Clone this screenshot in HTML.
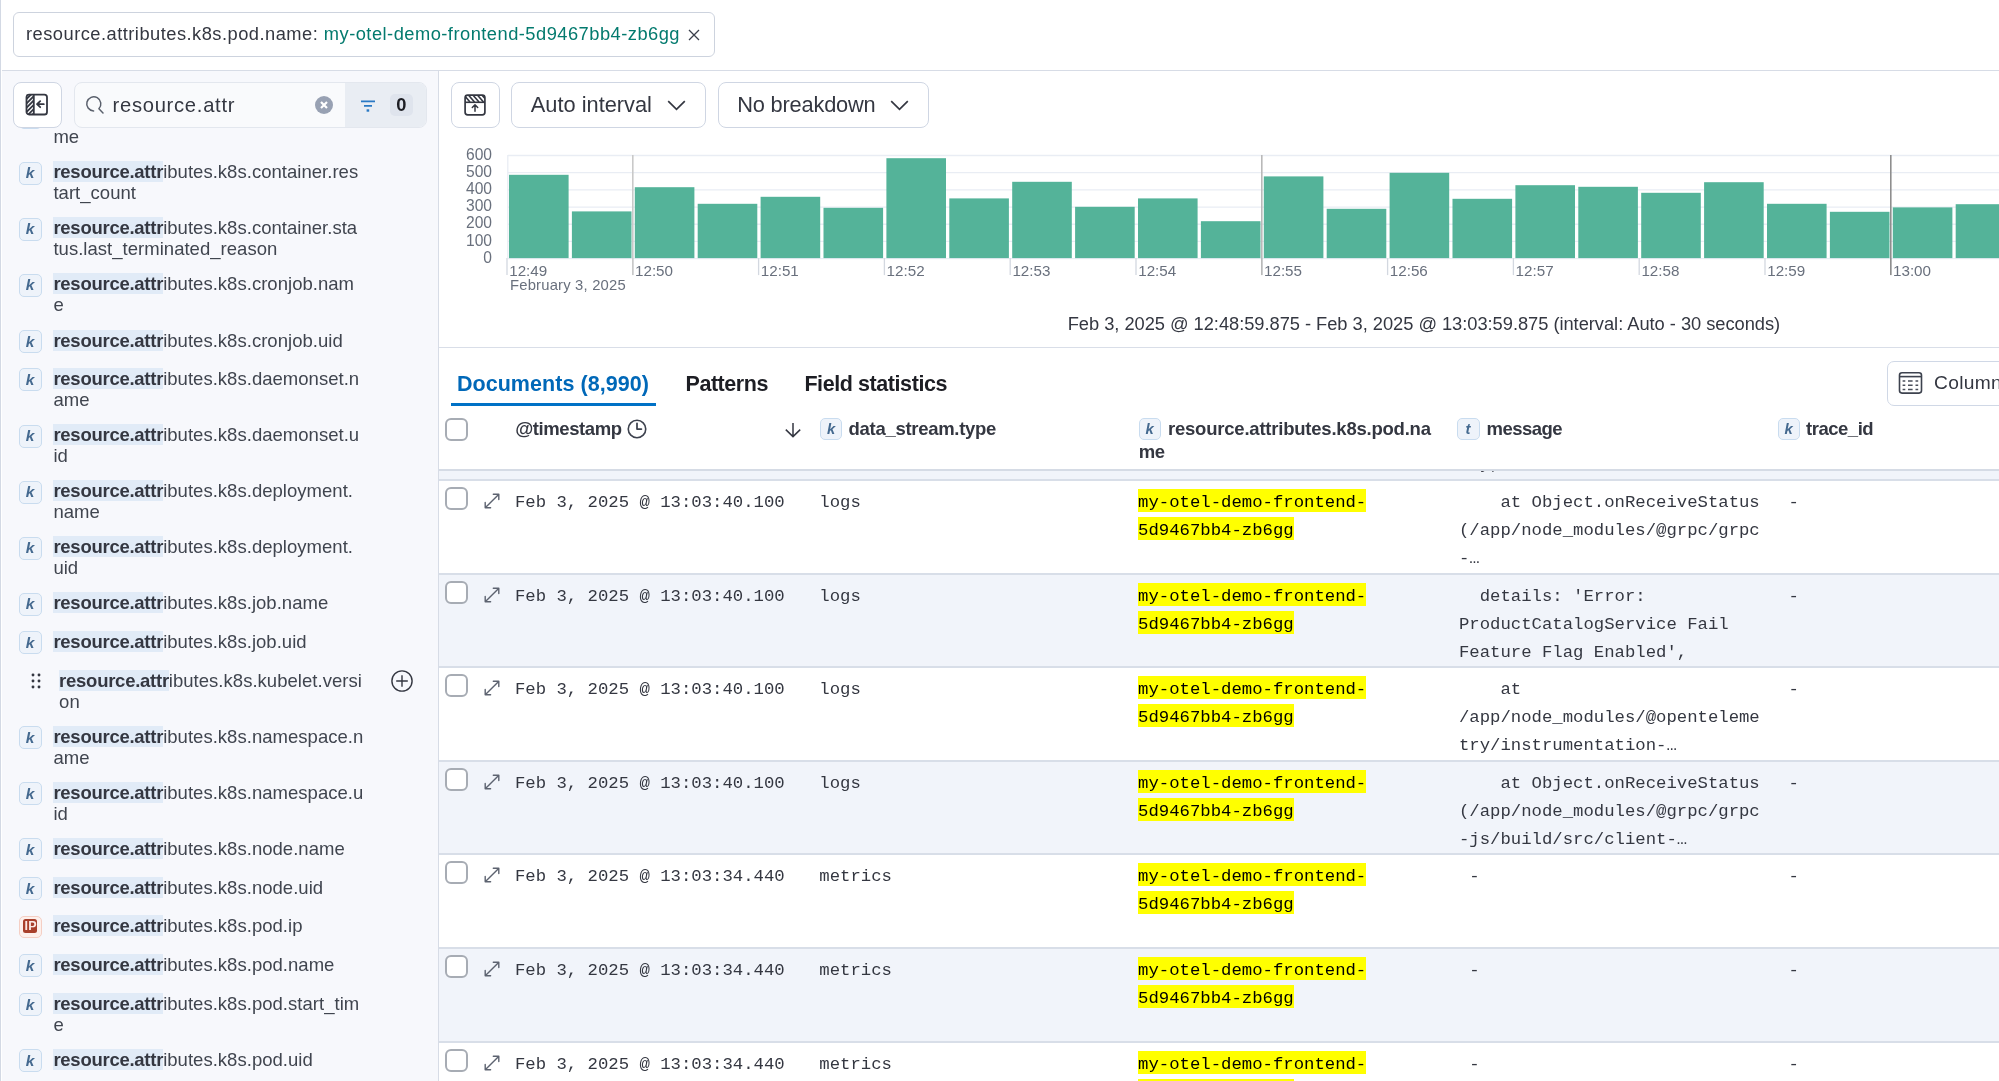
<!DOCTYPE html><html><head><meta charset="utf-8"><style>
*{box-sizing:border-box;margin:0;padding:0}
html,body{width:1999px;height:1081px;overflow:hidden;background:#fff;font-family:'Liberation Sans', sans-serif;color:#343741}
.a{position:absolute}
.t{position:absolute;white-space:pre;line-height:1}
.mono{font-family:'Liberation Mono', monospace}
</style></head><body><div id="root" style="will-change:transform;position:absolute;left:0;top:0;width:1999px;height:1081px;overflow:hidden"><div class="a" style="left:2px;top:69.5px;width:1997px;height:1.2px;background:#d7dce6"></div>
<div class="a" style="left:13px;top:12px;width:702px;height:45px;border:1.3px solid #cdd3de;border-radius:6px;background:#fff"></div>
<div class="t" style="left:26.00px;top:25px;font-size:18.3px;height:18.3px;color:#343741;font-weight:400;letter-spacing:0.48px;font-family:'Liberation Sans', sans-serif;">resource.attributes.k8s.pod.name: <span style="color:#037a6e">my-otel-demo-frontend-5d9467bb4-zb6gg</span></div>
<svg class="a" style="left:687.5px;top:28.5px" width="12" height="12" viewBox="0 0 12 12"><path d="M1 1L11 11M11 1L1 11" stroke="#3a3f4b" stroke-width="1.3" fill="none"/></svg>
<div class="a" style="left:2px;top:70.7px;width:436px;height:1011px;background:#f7f8fc"></div>
<div class="a" style="left:438px;top:70.7px;width:1.2px;height:1011px;background:#d7dce6"></div>
<div class="a" style="left:13px;top:82px;width:48.5px;height:46px;border:1.3px solid #cfd6e3;border-radius:8px;background:#fff"></div>
<svg class="a" style="left:25px;top:93px" width="23" height="23" viewBox="0 0 23 23">
<defs><clipPath id="cp1"><rect x="1.5" y="1.5" width="7.5" height="20"/></clipPath></defs>
<g clip-path="url(#cp1)" stroke="#343741" stroke-width="1.75"><path d="M-6 9.3L9 -5.7M-6 13.6L9 -1.4M-6 17.9L9 2.9M-6 22.2L9 7.2M-6 26.5L9 11.5M-6 30.8L9 15.8M-6 35.1L9 20.1"/></g>
<rect x="1.5" y="1.6" width="20.5" height="19.9" rx="2.6" fill="none" stroke="#343741" stroke-width="1.8"/>
<path d="M8.8 1.6V21.5" stroke="#343741" stroke-width="1.8"/>
<path d="M18.8 11.2H12.2M15.2 8.2L12 11.2L15.2 14.2" stroke="#343741" stroke-width="1.8" fill="none" stroke-linecap="round" stroke-linejoin="round"/>
</svg>
<div class="a" style="left:74px;top:82px;width:352.5px;height:46px;border:1.1px solid #e3e7ee;border-radius:8px;background:#f9fafc;overflow:hidden"><div class="a" style="left:270px;top:0;width:83px;height:46px;background:#e9edf3"></div></div>
<svg class="a" style="left:85px;top:95px" width="20" height="20" viewBox="0 0 20 20"><path d="M8.6 15.9A7.05 7.05 0 1 1 13.9 13.7L18 17.9" fill="none" stroke="#5a606c" stroke-width="1.5" stroke-linecap="round" stroke-linejoin="round"/></svg>
<div class="t" style="left:112.50px;top:95px;font-size:20.2px;height:20.2px;color:#343741;font-weight:400;letter-spacing:0.72px;font-family:'Liberation Sans', sans-serif;">resource.attr</div>
<svg class="a" style="left:315px;top:96px" width="18" height="18" viewBox="0 0 18 18"><circle cx="9" cy="9" r="9" fill="#98a1b3"/><path d="M6 6L12 12M12 6L6 12" stroke="#fff" stroke-width="2.2"/></svg>
<svg class="a" style="left:359.5px;top:100px" width="16" height="12" viewBox="0 0 16 12"><path d="M1 1.3H15M4 5.8H12" stroke="#2a79c4" stroke-width="1.7"/><rect x="6.6" y="9.3" width="2.6" height="2.4" fill="#2a79c4"/></svg>
<div class="a" style="left:390px;top:94px;width:23px;height:22px;border-radius:5px;background:#dfe4ed"></div>
<div class="t" style="left:396.30px;top:96px;font-size:18.3px;height:18.3px;color:#1d1e24;font-weight:700;letter-spacing:0px;font-family:'Liberation Sans', sans-serif;">0</div>
<div class="a" style="left:0px;top:128px;width:438px;height:953px;overflow:hidden"><div class="a" style="left:18.7px;top:-22.47px;width:23.2px;height:23px;border:1.2px solid #c9dcef;border-radius:5px;background:#eef3fa"></div><div class="t" style="left:25.8px;top:-18.77px;font-size:15.5px;font-weight:700;font-style:italic;color:#44698f;height:15.5px">k</div><div class="t" style="left:53.4px;top:-23.00px;font-size:18.5px;line-height:21px;color:#40454f;letter-spacing:0.03px"><span style="background:#e1ebf7;font-weight:700;letter-spacing:-0.26px;color:#343741">resource.attr</span>ibutes.k8s.container.na<br>me</div><div class="a" style="left:18.7px;top:33.60px;width:23.2px;height:23px;border:1.2px solid #c9dcef;border-radius:5px;background:#eef3fa"></div><div class="t" style="left:25.8px;top:37.30px;font-size:15.5px;font-weight:700;font-style:italic;color:#44698f;height:15.5px">k</div><div class="t" style="left:53.4px;top:33.00px;font-size:18.5px;line-height:21px;color:#40454f;letter-spacing:0.03px"><span style="background:#e1ebf7;font-weight:700;letter-spacing:-0.26px;color:#343741">resource.attr</span>ibutes.k8s.container.res<br>tart_count</div><div class="a" style="left:18.7px;top:89.67px;width:23.2px;height:23px;border:1.2px solid #c9dcef;border-radius:5px;background:#eef3fa"></div><div class="t" style="left:25.8px;top:93.37px;font-size:15.5px;font-weight:700;font-style:italic;color:#44698f;height:15.5px">k</div><div class="t" style="left:53.4px;top:89.00px;font-size:18.5px;line-height:21px;color:#40454f;letter-spacing:0.03px"><span style="background:#e1ebf7;font-weight:700;letter-spacing:-0.26px;color:#343741">resource.attr</span>ibutes.k8s.container.sta<br>tus.last_terminated_reason</div><div class="a" style="left:18.7px;top:145.74px;width:23.2px;height:23px;border:1.2px solid #c9dcef;border-radius:5px;background:#eef3fa"></div><div class="t" style="left:25.8px;top:149.44px;font-size:15.5px;font-weight:700;font-style:italic;color:#44698f;height:15.5px">k</div><div class="t" style="left:53.4px;top:145.00px;font-size:18.5px;line-height:21px;color:#40454f;letter-spacing:0.03px"><span style="background:#e1ebf7;font-weight:700;letter-spacing:-0.26px;color:#343741">resource.attr</span>ibutes.k8s.cronjob.nam<br>e</div><div class="a" style="left:18.7px;top:201.81px;width:23.2px;height:23px;border:1.2px solid #c9dcef;border-radius:5px;background:#eef3fa"></div><div class="t" style="left:25.8px;top:205.51px;font-size:15.5px;font-weight:700;font-style:italic;color:#44698f;height:15.5px">k</div><div class="t" style="left:53.4px;top:202.00px;font-size:18.5px;line-height:21px;color:#40454f;letter-spacing:0.03px"><span style="background:#e1ebf7;font-weight:700;letter-spacing:-0.26px;color:#343741">resource.attr</span>ibutes.k8s.cronjob.uid</div><div class="a" style="left:18.7px;top:240.46px;width:23.2px;height:23px;border:1.2px solid #c9dcef;border-radius:5px;background:#eef3fa"></div><div class="t" style="left:25.8px;top:244.16px;font-size:15.5px;font-weight:700;font-style:italic;color:#44698f;height:15.5px">k</div><div class="t" style="left:53.4px;top:240.00px;font-size:18.5px;line-height:21px;color:#40454f;letter-spacing:0.03px"><span style="background:#e1ebf7;font-weight:700;letter-spacing:-0.26px;color:#343741">resource.attr</span>ibutes.k8s.daemonset.n<br>ame</div><div class="a" style="left:18.7px;top:296.53px;width:23.2px;height:23px;border:1.2px solid #c9dcef;border-radius:5px;background:#eef3fa"></div><div class="t" style="left:25.8px;top:300.23px;font-size:15.5px;font-weight:700;font-style:italic;color:#44698f;height:15.5px">k</div><div class="t" style="left:53.4px;top:296.00px;font-size:18.5px;line-height:21px;color:#40454f;letter-spacing:0.03px"><span style="background:#e1ebf7;font-weight:700;letter-spacing:-0.26px;color:#343741">resource.attr</span>ibutes.k8s.daemonset.u<br>id</div><div class="a" style="left:18.7px;top:352.60px;width:23.2px;height:23px;border:1.2px solid #c9dcef;border-radius:5px;background:#eef3fa"></div><div class="t" style="left:25.8px;top:356.30px;font-size:15.5px;font-weight:700;font-style:italic;color:#44698f;height:15.5px">k</div><div class="t" style="left:53.4px;top:352.00px;font-size:18.5px;line-height:21px;color:#40454f;letter-spacing:0.03px"><span style="background:#e1ebf7;font-weight:700;letter-spacing:-0.26px;color:#343741">resource.attr</span>ibutes.k8s.deployment.<br>name</div><div class="a" style="left:18.7px;top:408.67px;width:23.2px;height:23px;border:1.2px solid #c9dcef;border-radius:5px;background:#eef3fa"></div><div class="t" style="left:25.8px;top:412.37px;font-size:15.5px;font-weight:700;font-style:italic;color:#44698f;height:15.5px">k</div><div class="t" style="left:53.4px;top:408.00px;font-size:18.5px;line-height:21px;color:#40454f;letter-spacing:0.03px"><span style="background:#e1ebf7;font-weight:700;letter-spacing:-0.26px;color:#343741">resource.attr</span>ibutes.k8s.deployment.<br>uid</div><div class="a" style="left:18.7px;top:464.74px;width:23.2px;height:23px;border:1.2px solid #c9dcef;border-radius:5px;background:#eef3fa"></div><div class="t" style="left:25.8px;top:468.44px;font-size:15.5px;font-weight:700;font-style:italic;color:#44698f;height:15.5px">k</div><div class="t" style="left:53.4px;top:464.00px;font-size:18.5px;line-height:21px;color:#40454f;letter-spacing:0.03px"><span style="background:#e1ebf7;font-weight:700;letter-spacing:-0.26px;color:#343741">resource.attr</span>ibutes.k8s.job.name</div><div class="a" style="left:18.7px;top:503.39px;width:23.2px;height:23px;border:1.2px solid #c9dcef;border-radius:5px;background:#eef3fa"></div><div class="t" style="left:25.8px;top:507.09px;font-size:15.5px;font-weight:700;font-style:italic;color:#44698f;height:15.5px">k</div><div class="t" style="left:53.4px;top:503.00px;font-size:18.5px;line-height:21px;color:#40454f;letter-spacing:0.03px"><span style="background:#e1ebf7;font-weight:700;letter-spacing:-0.26px;color:#343741">resource.attr</span>ibutes.k8s.job.uid</div><svg class="a" style="left:31.00px;top:545.40px" width="4" height="4"><circle cx="2" cy="2" r="1.45" fill="#343741"/></svg><svg class="a" style="left:31.00px;top:551.20px" width="4" height="4"><circle cx="2" cy="2" r="1.45" fill="#343741"/></svg><svg class="a" style="left:31.00px;top:556.90px" width="4" height="4"><circle cx="2" cy="2" r="1.45" fill="#343741"/></svg><svg class="a" style="left:36.80px;top:545.40px" width="4" height="4"><circle cx="2" cy="2" r="1.45" fill="#343741"/></svg><svg class="a" style="left:36.80px;top:551.20px" width="4" height="4"><circle cx="2" cy="2" r="1.45" fill="#343741"/></svg><svg class="a" style="left:36.80px;top:556.90px" width="4" height="4"><circle cx="2" cy="2" r="1.45" fill="#343741"/></svg><svg class="a" style="left:391px;top:541.90px" width="22" height="22" viewBox="0 0 22 22"><circle cx="11" cy="11" r="10.1" fill="none" stroke="#343741" stroke-width="1.4"/><path d="M11 5.2V16.8M5.2 11H16.8" stroke="#343741" stroke-width="1.4"/></svg><div class="t" style="left:59.1px;top:542.00px;font-size:18.5px;line-height:21px;color:#40454f;letter-spacing:0.03px"><span style="background:#e1ebf7;font-weight:700;letter-spacing:-0.26px;color:#343741">resource.attr</span>ibutes.k8s.kubelet.versi<br>on</div><div class="a" style="left:18.7px;top:598.11px;width:23.2px;height:23px;border:1.2px solid #c9dcef;border-radius:5px;background:#eef3fa"></div><div class="t" style="left:25.8px;top:601.81px;font-size:15.5px;font-weight:700;font-style:italic;color:#44698f;height:15.5px">k</div><div class="t" style="left:53.4px;top:598.00px;font-size:18.5px;line-height:21px;color:#40454f;letter-spacing:0.03px"><span style="background:#e1ebf7;font-weight:700;letter-spacing:-0.26px;color:#343741">resource.attr</span>ibutes.k8s.namespace.n<br>ame</div><div class="a" style="left:18.7px;top:654.18px;width:23.2px;height:23px;border:1.2px solid #c9dcef;border-radius:5px;background:#eef3fa"></div><div class="t" style="left:25.8px;top:657.88px;font-size:15.5px;font-weight:700;font-style:italic;color:#44698f;height:15.5px">k</div><div class="t" style="left:53.4px;top:654.00px;font-size:18.5px;line-height:21px;color:#40454f;letter-spacing:0.03px"><span style="background:#e1ebf7;font-weight:700;letter-spacing:-0.26px;color:#343741">resource.attr</span>ibutes.k8s.namespace.u<br>id</div><div class="a" style="left:18.7px;top:710.25px;width:23.2px;height:23px;border:1.2px solid #c9dcef;border-radius:5px;background:#eef3fa"></div><div class="t" style="left:25.8px;top:713.95px;font-size:15.5px;font-weight:700;font-style:italic;color:#44698f;height:15.5px">k</div><div class="t" style="left:53.4px;top:710.00px;font-size:18.5px;line-height:21px;color:#40454f;letter-spacing:0.03px"><span style="background:#e1ebf7;font-weight:700;letter-spacing:-0.26px;color:#343741">resource.attr</span>ibutes.k8s.node.name</div><div class="a" style="left:18.7px;top:748.90px;width:23.2px;height:23px;border:1.2px solid #c9dcef;border-radius:5px;background:#eef3fa"></div><div class="t" style="left:25.8px;top:752.60px;font-size:15.5px;font-weight:700;font-style:italic;color:#44698f;height:15.5px">k</div><div class="t" style="left:53.4px;top:749.00px;font-size:18.5px;line-height:21px;color:#40454f;letter-spacing:0.03px"><span style="background:#e1ebf7;font-weight:700;letter-spacing:-0.26px;color:#343741">resource.attr</span>ibutes.k8s.node.uid</div><div class="a" style="left:19px;top:787.55px;width:22.8px;height:22.5px;border:1.2px solid #f5cfc4;border-radius:5px;background:#fdf0ec"></div><div class="a" style="left:23.2px;top:790.65px;width:13.8px;height:14.7px;border-radius:2.5px;background:#a83f2b"></div><div class="t" style="left:24.6px;top:791.65px;font-size:12.5px;font-weight:700;color:#fbe9e4;height:12.5px;letter-spacing:0.2px">IP</div><div class="t" style="left:53.4px;top:787.00px;font-size:18.5px;line-height:21px;color:#40454f;letter-spacing:0.03px"><span style="background:#e1ebf7;font-weight:700;letter-spacing:-0.26px;color:#343741">resource.attr</span>ibutes.k8s.pod.ip</div><div class="a" style="left:18.7px;top:826.20px;width:23.2px;height:23px;border:1.2px solid #c9dcef;border-radius:5px;background:#eef3fa"></div><div class="t" style="left:25.8px;top:829.90px;font-size:15.5px;font-weight:700;font-style:italic;color:#44698f;height:15.5px">k</div><div class="t" style="left:53.4px;top:826.00px;font-size:18.5px;line-height:21px;color:#40454f;letter-spacing:0.03px"><span style="background:#e1ebf7;font-weight:700;letter-spacing:-0.26px;color:#343741">resource.attr</span>ibutes.k8s.pod.name</div><div class="a" style="left:18.7px;top:864.85px;width:23.2px;height:23px;border:1.2px solid #c9dcef;border-radius:5px;background:#eef3fa"></div><div class="t" style="left:25.8px;top:868.55px;font-size:15.5px;font-weight:700;font-style:italic;color:#44698f;height:15.5px">k</div><div class="t" style="left:53.4px;top:865.00px;font-size:18.5px;line-height:21px;color:#40454f;letter-spacing:0.03px"><span style="background:#e1ebf7;font-weight:700;letter-spacing:-0.26px;color:#343741">resource.attr</span>ibutes.k8s.pod.start_tim<br>e</div><div class="a" style="left:18.7px;top:920.92px;width:23.2px;height:23px;border:1.2px solid #c9dcef;border-radius:5px;background:#eef3fa"></div><div class="t" style="left:25.8px;top:924.62px;font-size:15.5px;font-weight:700;font-style:italic;color:#44698f;height:15.5px">k</div><div class="t" style="left:53.4px;top:921.00px;font-size:18.5px;line-height:21px;color:#40454f;letter-spacing:0.03px"><span style="background:#e1ebf7;font-weight:700;letter-spacing:-0.26px;color:#343741">resource.attr</span>ibutes.k8s.pod.uid</div></div>
<div class="a" style="left:0;top:0;width:1.4px;height:1081px;background:#d3d9e4"></div>
<div class="a" style="left:451px;top:82px;width:48.5px;height:46px;border:1.3px solid #cfd6e3;border-radius:8px;background:#fff"></div>
<svg class="a" style="left:463.5px;top:93.5px" width="22" height="22" viewBox="0 0 22 22">
<defs><clipPath id="cp2"><rect x="1" y="1" width="20" height="7"/></clipPath></defs>
<g clip-path="url(#cp2)" stroke="#343741" stroke-width="1.6"><path d="M-1 0L6 8M3.5 0L10.5 8M8 0L15 8M12.5 0L19.5 8M17 0L24 8"/></g>
<rect x="1.1" y="1.1" width="19.8" height="19.8" rx="2.6" fill="none" stroke="#343741" stroke-width="1.7"/>
<path d="M1.1 8.3H20.9" stroke="#343741" stroke-width="1.6"/>
<path d="M11 17.2V11M8.3 13.5L11 10.8L13.7 13.5" stroke="#343741" stroke-width="1.5" fill="none" stroke-linecap="round" stroke-linejoin="round"/>
</svg>
<div class="a" style="left:511.4px;top:82px;width:194.4px;height:46px;border:1.3px solid #cfd6e3;border-radius:8px;background:#fff"></div>
<div class="t" style="left:530.80px;top:94px;font-size:21.8px;height:21.8px;color:#343741;font-weight:400;letter-spacing:0.0px;font-family:'Liberation Sans', sans-serif;">Auto interval</div>
<svg class="a" style="left:667.2px;top:99.5px" width="19" height="11" viewBox="0 0 19 11"><path d="M1.2 1.2L9.5 9.3L17.8 1.2" fill="none" stroke="#343741" stroke-width="1.7"/></svg>
<div class="a" style="left:718.4px;top:82px;width:210.4px;height:46px;border:1.3px solid #cfd6e3;border-radius:8px;background:#fff"></div>
<div class="t" style="left:737.30px;top:94px;font-size:21.8px;height:21.8px;color:#343741;font-weight:400;letter-spacing:-0.2px;font-family:'Liberation Sans', sans-serif;">No breakdown</div>
<svg class="a" style="left:890.2px;top:99.5px" width="19" height="11" viewBox="0 0 19 11"><path d="M1.2 1.2L9.5 9.3L17.8 1.2" fill="none" stroke="#343741" stroke-width="1.7"/></svg>
<svg class="a" style="left:507.6px;top:155.2px;overflow:visible" width="1491.4" height="125" viewBox="0 0 1491.4 125"><line x1="0" x2="1491.4" y1="0.50" y2="0.50" stroke="#e9edf4" stroke-width="1.3"/><line x1="0" x2="1491.4" y1="17.68" y2="17.68" stroke="#e9edf4" stroke-width="1.3"/><line x1="0" x2="1491.4" y1="34.87" y2="34.87" stroke="#e9edf4" stroke-width="1.3"/><line x1="0" x2="1491.4" y1="52.05" y2="52.05" stroke="#e9edf4" stroke-width="1.3"/><line x1="0" x2="1491.4" y1="69.23" y2="69.23" stroke="#e9edf4" stroke-width="1.3"/><line x1="0" x2="1491.4" y1="86.42" y2="86.42" stroke="#e9edf4" stroke-width="1.3"/><line x1="0" x2="1491.4" y1="103.60" y2="103.60" stroke="#e9edf4" stroke-width="1.3"/><line x1="-0.2" x2="-0.2" y1="0" y2="103.10" stroke="#e9edf4" stroke-width="1.3"/><rect x="1.00" y="19.80" width="59.6" height="83.30" fill="#54b399"/><rect x="63.90" y="56.40" width="59.6" height="46.70" fill="#54b399"/><rect x="126.80" y="32.20" width="59.6" height="70.90" fill="#54b399"/><rect x="189.70" y="48.80" width="59.6" height="54.30" fill="#54b399"/><rect x="252.60" y="41.80" width="59.6" height="61.30" fill="#54b399"/><rect x="315.50" y="52.80" width="59.6" height="50.30" fill="#54b399"/><rect x="378.40" y="3.20" width="59.6" height="99.90" fill="#54b399"/><rect x="441.30" y="43.40" width="59.6" height="59.70" fill="#54b399"/><rect x="504.20" y="26.80" width="59.6" height="76.30" fill="#54b399"/><rect x="567.10" y="51.80" width="59.6" height="51.30" fill="#54b399"/><rect x="630.00" y="43.40" width="59.6" height="59.70" fill="#54b399"/><rect x="692.90" y="66.20" width="59.6" height="36.90" fill="#54b399"/><rect x="755.80" y="21.40" width="59.6" height="81.70" fill="#54b399"/><rect x="818.70" y="53.80" width="59.6" height="49.30" fill="#54b399"/><rect x="881.60" y="17.80" width="59.6" height="85.30" fill="#54b399"/><rect x="944.50" y="43.80" width="59.6" height="59.30" fill="#54b399"/><rect x="1007.40" y="30.20" width="59.6" height="72.90" fill="#54b399"/><rect x="1070.30" y="31.80" width="59.6" height="71.30" fill="#54b399"/><rect x="1133.20" y="37.80" width="59.6" height="65.30" fill="#54b399"/><rect x="1196.10" y="27.20" width="59.6" height="75.90" fill="#54b399"/><rect x="1259.00" y="48.80" width="59.6" height="54.30" fill="#54b399"/><rect x="1321.90" y="56.80" width="59.6" height="46.30" fill="#54b399"/><rect x="1384.80" y="52.40" width="59.6" height="50.70" fill="#54b399"/><rect x="1447.70" y="49.20" width="59.6" height="53.90" fill="#54b399"/><line x1="-1.00" x2="-1.00" y1="103.10" y2="120.10" stroke="#d3d8e0" stroke-width="1.3"/><line x1="124.80" x2="124.80" y1="103.10" y2="120.10" stroke="#d3d8e0" stroke-width="1.3"/><line x1="250.60" x2="250.60" y1="103.10" y2="120.10" stroke="#d3d8e0" stroke-width="1.3"/><line x1="376.40" x2="376.40" y1="103.10" y2="120.10" stroke="#d3d8e0" stroke-width="1.3"/><line x1="502.20" x2="502.20" y1="103.10" y2="120.10" stroke="#d3d8e0" stroke-width="1.3"/><line x1="628.00" x2="628.00" y1="103.10" y2="120.10" stroke="#d3d8e0" stroke-width="1.3"/><line x1="753.80" x2="753.80" y1="103.10" y2="120.10" stroke="#d3d8e0" stroke-width="1.3"/><line x1="879.60" x2="879.60" y1="103.10" y2="120.10" stroke="#d3d8e0" stroke-width="1.3"/><line x1="1005.40" x2="1005.40" y1="103.10" y2="120.10" stroke="#d3d8e0" stroke-width="1.3"/><line x1="1131.20" x2="1131.20" y1="103.10" y2="120.10" stroke="#d3d8e0" stroke-width="1.3"/><line x1="1257.00" x2="1257.00" y1="103.10" y2="120.10" stroke="#d3d8e0" stroke-width="1.3"/><line x1="1382.80" x2="1382.80" y1="103.10" y2="120.10" stroke="#d3d8e0" stroke-width="1.3"/><line x1="124.80" x2="124.80" y1="0" y2="120.10" stroke="#c9c9c9" stroke-width="1.6"/><line x1="753.80" x2="753.80" y1="0" y2="120.10" stroke="#b9b9b9" stroke-width="1.6"/><line x1="1382.80" x2="1382.80" y1="0" y2="120.10" stroke="#8e8e8e" stroke-width="1.6"/></svg>
<div class="t" style="left:420px;width:72px;text-align:right;top:147px;font-size:15.6px;height:15.6px;color:#69707d">600</div>
<div class="t" style="left:420px;width:72px;text-align:right;top:164px;font-size:15.6px;height:15.6px;color:#69707d">500</div>
<div class="t" style="left:420px;width:72px;text-align:right;top:181px;font-size:15.6px;height:15.6px;color:#69707d">400</div>
<div class="t" style="left:420px;width:72px;text-align:right;top:198px;font-size:15.6px;height:15.6px;color:#69707d">300</div>
<div class="t" style="left:420px;width:72px;text-align:right;top:215px;font-size:15.6px;height:15.6px;color:#69707d">200</div>
<div class="t" style="left:420px;width:72px;text-align:right;top:233px;font-size:15.6px;height:15.6px;color:#69707d">100</div>
<div class="t" style="left:420px;width:72px;text-align:right;top:250px;font-size:15.6px;height:15.6px;color:#69707d">0</div>
<div class="t" style="left:509.20px;top:263px;font-size:15.2px;height:15.2px;color:#69707d;font-weight:400;letter-spacing:0px;font-family:'Liberation Sans', sans-serif;">12:49</div>
<div class="t" style="left:635.00px;top:263px;font-size:15.2px;height:15.2px;color:#69707d;font-weight:400;letter-spacing:0px;font-family:'Liberation Sans', sans-serif;">12:50</div>
<div class="t" style="left:760.80px;top:263px;font-size:15.2px;height:15.2px;color:#69707d;font-weight:400;letter-spacing:0px;font-family:'Liberation Sans', sans-serif;">12:51</div>
<div class="t" style="left:886.60px;top:263px;font-size:15.2px;height:15.2px;color:#69707d;font-weight:400;letter-spacing:0px;font-family:'Liberation Sans', sans-serif;">12:52</div>
<div class="t" style="left:1012.40px;top:263px;font-size:15.2px;height:15.2px;color:#69707d;font-weight:400;letter-spacing:0px;font-family:'Liberation Sans', sans-serif;">12:53</div>
<div class="t" style="left:1138.20px;top:263px;font-size:15.2px;height:15.2px;color:#69707d;font-weight:400;letter-spacing:0px;font-family:'Liberation Sans', sans-serif;">12:54</div>
<div class="t" style="left:1264.00px;top:263px;font-size:15.2px;height:15.2px;color:#69707d;font-weight:400;letter-spacing:0px;font-family:'Liberation Sans', sans-serif;">12:55</div>
<div class="t" style="left:1389.80px;top:263px;font-size:15.2px;height:15.2px;color:#69707d;font-weight:400;letter-spacing:0px;font-family:'Liberation Sans', sans-serif;">12:56</div>
<div class="t" style="left:1515.60px;top:263px;font-size:15.2px;height:15.2px;color:#69707d;font-weight:400;letter-spacing:0px;font-family:'Liberation Sans', sans-serif;">12:57</div>
<div class="t" style="left:1641.40px;top:263px;font-size:15.2px;height:15.2px;color:#69707d;font-weight:400;letter-spacing:0px;font-family:'Liberation Sans', sans-serif;">12:58</div>
<div class="t" style="left:1767.20px;top:263px;font-size:15.2px;height:15.2px;color:#69707d;font-weight:400;letter-spacing:0px;font-family:'Liberation Sans', sans-serif;">12:59</div>
<div class="t" style="left:1893.00px;top:263px;font-size:15.2px;height:15.2px;color:#69707d;font-weight:400;letter-spacing:0px;font-family:'Liberation Sans', sans-serif;">13:00</div>
<div class="t" style="left:510.00px;top:278px;font-size:14.8px;height:14.8px;color:#69707d;font-weight:400;letter-spacing:0.2px;font-family:'Liberation Sans', sans-serif;">February 3, 2025</div>
<div class="t" style="left:1067.70px;top:315px;font-size:18.3px;height:18.3px;color:#343741;font-weight:400;letter-spacing:-0.03px;font-family:'Liberation Sans', sans-serif;">Feb 3, 2025 @ 12:48:59.875 - Feb 3, 2025 @ 13:03:59.875 (interval: Auto - 30 seconds)</div>
<div class="a" style="left:439px;top:347.2px;width:1560px;height:1.3px;background:#d9dee8"></div>
<div class="t" style="left:456.90px;top:374px;font-size:21.5px;height:21.5px;color:#0068b8;font-weight:700;letter-spacing:0.05px;font-family:'Liberation Sans', sans-serif;">Documents (8,990)</div>
<div class="a" style="left:451px;top:402.7px;width:205px;height:3.5px;background:#0071c6"></div>
<div class="t" style="left:685.50px;top:374px;font-size:21.5px;height:21.5px;color:#1d1e24;font-weight:700;letter-spacing:-0.45px;font-family:'Liberation Sans', sans-serif;">Patterns</div>
<div class="t" style="left:804.40px;top:374px;font-size:21.5px;height:21.5px;color:#1d1e24;font-weight:700;letter-spacing:-0.42px;font-family:'Liberation Sans', sans-serif;">Field statistics</div>
<div class="a" style="left:1886.5px;top:360.5px;width:200px;height:45px;border:1.3px solid #d0d8e6;border-radius:7px;background:#fff"></div>
<svg class="a" style="left:1898px;top:371px" width="25" height="25" viewBox="0 0 25 25">
<rect x="1.5" y="1.7" width="22" height="20.4" rx="2.5" fill="none" stroke="#3d424e" stroke-width="1.6"/>
<path d="M1.5 5.6H23.5" stroke="#3d424e" stroke-width="1.6"/>
<path d="M4.6 9.9H7.3M10 9.9H14.6M17.5 9.9H20.2M4.6 14.2H7.3M10 14.2H14.6M17.5 14.2H20.2M4.6 18.5H7.3M10 18.5H14.6M17.5 18.5H20.2" stroke="#4a4f5b" stroke-width="1.5"/>
</svg>
<div class="t" style="left:1934.00px;top:373px;font-size:19.2px;height:19.2px;color:#343741;font-weight:400;letter-spacing:0.3px;font-family:'Liberation Sans', sans-serif;">Columns</div>
<div class="a" style="left:445.4px;top:418.2px;width:22.8px;height:22.8px;border:2px solid #a7acb4;border-radius:6px;background:#fff"></div>
<div class="t" style="left:515.20px;top:420px;font-size:18.5px;height:18.5px;color:#343741;font-weight:700;letter-spacing:-0.42px;font-family:'Liberation Sans', sans-serif;">@timestamp</div>
<svg class="a" style="left:627.2px;top:419.2px" width="20" height="20" viewBox="0 0 20 20"><circle cx="10" cy="10" r="8.75" fill="none" stroke="#3d424e" stroke-width="1.6"/><path d="M10 4.3V10H14.4" fill="none" stroke="#3d424e" stroke-width="1.75" stroke-linecap="round" stroke-linejoin="round"/></svg>
<svg class="a" style="left:784px;top:422px" width="18" height="16" viewBox="0 0 18 16"><path d="M9 1V14.5M1.8 7.6L9 14.6L16.2 7.6" fill="none" stroke="#343741" stroke-width="1.5"/></svg>
<div class="a" style="left:820.2px;top:418.2px;width:22.2px;height:22px;border:1.2px solid #c9dcef;border-radius:5px;background:#eef3fa"></div>
<div class="t" style="left:827.0px;top:422.4px;font-size:14.8px;height:14.8px;font-weight:700;font-style:italic;color:#44698f">k</div>
<div class="t" style="left:848.60px;top:420px;font-size:18.5px;height:18.5px;color:#343741;font-weight:700;letter-spacing:-0.3px;font-family:'Liberation Sans', sans-serif;">data_stream.type</div>
<div class="a" style="left:1138.7px;top:418.1px;width:22.2px;height:22px;border:1.2px solid #c9dcef;border-radius:5px;background:#eef3fa"></div>
<div class="t" style="left:1145.5px;top:422.3px;font-size:14.8px;height:14.8px;font-weight:700;font-style:italic;color:#44698f">k</div>
<div class="t" style="left:1168.00px;top:420px;font-size:18.5px;height:18.5px;color:#343741;font-weight:700;letter-spacing:-0.22px;font-family:'Liberation Sans', sans-serif;">resource.attributes.k8s.pod.na</div>
<div class="t" style="left:1138.70px;top:443px;font-size:18.5px;height:18.5px;color:#343741;font-weight:700;letter-spacing:-0.3px;font-family:'Liberation Sans', sans-serif;">me</div>
<div class="a" style="left:1457.4px;top:418.1px;width:22.2px;height:22px;border:1.2px solid #c9dcef;border-radius:5px;background:#eef3fa"></div>
<div class="t" style="left:1465.4px;top:422.3px;font-size:14.8px;height:14.8px;font-weight:700;font-style:italic;color:#44698f">t</div>
<div class="t" style="left:1486.60px;top:420px;font-size:18.5px;height:18.5px;color:#343741;font-weight:700;letter-spacing:-0.53px;font-family:'Liberation Sans', sans-serif;">message</div>
<div class="a" style="left:1777.7px;top:418.1px;width:22.2px;height:22px;border:1.2px solid #c9dcef;border-radius:5px;background:#eef3fa"></div>
<div class="t" style="left:1784.5px;top:422.3px;font-size:14.8px;height:14.8px;font-weight:700;font-style:italic;color:#44698f">k</div>
<div class="t" style="left:1806.00px;top:420px;font-size:18.5px;height:18.5px;color:#343741;font-weight:700;letter-spacing:-0.48px;font-family:'Liberation Sans', sans-serif;">trace_id</div>
<div class="a" style="left:439px;top:469.2px;width:1560px;height:1.8px;background:#d5dbe5"></div>
<div class="a" style="left:439px;top:471px;width:1560px;height:610px;overflow:hidden">
<div class="a" style="left:0;top:-84px;width:1560px;height:94px;background:#f1f4fa;border-bottom:2px solid #d8dee8"></div>
<div class="t mono" style="left:1020px;top:-76.00px;font-size:17.3px;line-height:28px;color:#343741"><br><br>  y,</div>
<div class="a" style="left:0;top:10px;width:1560px;height:94px;background:#ffffff;border-bottom:2px solid #d8dee8"></div>
<div class="a" style="left:6.199999999999989px;top:16.4px;width:22.8px;height:22.8px;border:2px solid #a7acb4;border-radius:6px;background:#fff"></div>
<svg class="a" style="left:43.5px;top:21px" width="18" height="18" viewBox="0 0 18 18"><path d="M3 15L14.6 3.4M10.3 2.2H15.8V7.6M2.2 10.4V15.8H7.6" fill="none" stroke="#5d6370" stroke-width="1.4" stroke-linecap="round" stroke-linejoin="round"/></svg>
<div class="t mono" style="left:76px;top:18.00px;font-size:17.3px;line-height:28px;height:28px;color:#343741">Feb 3, 2025 @ 13:03:40.100</div>
<div class="t mono" style="left:380.29999999999995px;top:18.00px;font-size:17.3px;line-height:28px;height:28px;color:#343741">logs</div>
<div class="t mono" style="left:699.0999999999999px;top:18.00px;font-size:17.3px;line-height:28px;color:#000"><span style="background:#ffff00;padding:4px 0 0">my-otel-demo-frontend-</span><br><span style="background:#ffff00;padding:4px 0 0">5d9467bb4-zb6gg</span></div>
<div class="t mono" style="left:1349.5px;top:18.00px;font-size:17.3px;line-height:28px;height:28px;color:#343741">-</div>
<div class="t mono" style="left:1020px;top:18.00px;font-size:17.3px;line-height:28px;color:#343741">    at Object.onReceiveStatus<br>(/app/node_modules/@grpc/grpc<br>-…</div>
<div class="a" style="left:0;top:104px;width:1560px;height:93px;background:#f1f4fa;border-bottom:2px solid #d8dee8"></div>
<div class="a" style="left:6.199999999999989px;top:110.4px;width:22.8px;height:22.8px;border:2px solid #a7acb4;border-radius:6px;background:#fff"></div>
<svg class="a" style="left:43.5px;top:115px" width="18" height="18" viewBox="0 0 18 18"><path d="M3 15L14.6 3.4M10.3 2.2H15.8V7.6M2.2 10.4V15.8H7.6" fill="none" stroke="#5d6370" stroke-width="1.4" stroke-linecap="round" stroke-linejoin="round"/></svg>
<div class="t mono" style="left:76px;top:112.00px;font-size:17.3px;line-height:28px;height:28px;color:#343741">Feb 3, 2025 @ 13:03:40.100</div>
<div class="t mono" style="left:380.29999999999995px;top:112.00px;font-size:17.3px;line-height:28px;height:28px;color:#343741">logs</div>
<div class="t mono" style="left:699.0999999999999px;top:112.00px;font-size:17.3px;line-height:28px;color:#000"><span style="background:#ffff00;padding:4px 0 0">my-otel-demo-frontend-</span><br><span style="background:#ffff00;padding:4px 0 0">5d9467bb4-zb6gg</span></div>
<div class="t mono" style="left:1349.5px;top:112.00px;font-size:17.3px;line-height:28px;height:28px;color:#343741">-</div>
<div class="t mono" style="left:1020px;top:112.00px;font-size:17.3px;line-height:28px;color:#343741">  details: 'Error:<br>ProductCatalogService Fail<br>Feature Flag Enabled',</div>
<div class="a" style="left:0;top:197px;width:1560px;height:94px;background:#ffffff;border-bottom:2px solid #d8dee8"></div>
<div class="a" style="left:6.199999999999989px;top:203.4px;width:22.8px;height:22.8px;border:2px solid #a7acb4;border-radius:6px;background:#fff"></div>
<svg class="a" style="left:43.5px;top:208px" width="18" height="18" viewBox="0 0 18 18"><path d="M3 15L14.6 3.4M10.3 2.2H15.8V7.6M2.2 10.4V15.8H7.6" fill="none" stroke="#5d6370" stroke-width="1.4" stroke-linecap="round" stroke-linejoin="round"/></svg>
<div class="t mono" style="left:76px;top:205.00px;font-size:17.3px;line-height:28px;height:28px;color:#343741">Feb 3, 2025 @ 13:03:40.100</div>
<div class="t mono" style="left:380.29999999999995px;top:205.00px;font-size:17.3px;line-height:28px;height:28px;color:#343741">logs</div>
<div class="t mono" style="left:699.0999999999999px;top:205.00px;font-size:17.3px;line-height:28px;color:#000"><span style="background:#ffff00;padding:4px 0 0">my-otel-demo-frontend-</span><br><span style="background:#ffff00;padding:4px 0 0">5d9467bb4-zb6gg</span></div>
<div class="t mono" style="left:1349.5px;top:205.00px;font-size:17.3px;line-height:28px;height:28px;color:#343741">-</div>
<div class="t mono" style="left:1020px;top:205.00px;font-size:17.3px;line-height:28px;color:#343741">    at<br>/app/node_modules/@openteleme<br>try/instrumentation-…</div>
<div class="a" style="left:0;top:291px;width:1560px;height:93px;background:#f1f4fa;border-bottom:2px solid #d8dee8"></div>
<div class="a" style="left:6.199999999999989px;top:297.4px;width:22.8px;height:22.8px;border:2px solid #a7acb4;border-radius:6px;background:#fff"></div>
<svg class="a" style="left:43.5px;top:302px" width="18" height="18" viewBox="0 0 18 18"><path d="M3 15L14.6 3.4M10.3 2.2H15.8V7.6M2.2 10.4V15.8H7.6" fill="none" stroke="#5d6370" stroke-width="1.4" stroke-linecap="round" stroke-linejoin="round"/></svg>
<div class="t mono" style="left:76px;top:299.00px;font-size:17.3px;line-height:28px;height:28px;color:#343741">Feb 3, 2025 @ 13:03:40.100</div>
<div class="t mono" style="left:380.29999999999995px;top:299.00px;font-size:17.3px;line-height:28px;height:28px;color:#343741">logs</div>
<div class="t mono" style="left:699.0999999999999px;top:299.00px;font-size:17.3px;line-height:28px;color:#000"><span style="background:#ffff00;padding:4px 0 0">my-otel-demo-frontend-</span><br><span style="background:#ffff00;padding:4px 0 0">5d9467bb4-zb6gg</span></div>
<div class="t mono" style="left:1349.5px;top:299.00px;font-size:17.3px;line-height:28px;height:28px;color:#343741">-</div>
<div class="t mono" style="left:1020px;top:299.00px;font-size:17.3px;line-height:28px;color:#343741">    at Object.onReceiveStatus<br>(/app/node_modules/@grpc/grpc<br>-js/build/src/client-…</div>
<div class="a" style="left:0;top:384px;width:1560px;height:94px;background:#ffffff;border-bottom:2px solid #d8dee8"></div>
<div class="a" style="left:6.199999999999989px;top:390.4px;width:22.8px;height:22.8px;border:2px solid #a7acb4;border-radius:6px;background:#fff"></div>
<svg class="a" style="left:43.5px;top:395px" width="18" height="18" viewBox="0 0 18 18"><path d="M3 15L14.6 3.4M10.3 2.2H15.8V7.6M2.2 10.4V15.8H7.6" fill="none" stroke="#5d6370" stroke-width="1.4" stroke-linecap="round" stroke-linejoin="round"/></svg>
<div class="t mono" style="left:76px;top:392.00px;font-size:17.3px;line-height:28px;height:28px;color:#343741">Feb 3, 2025 @ 13:03:34.440</div>
<div class="t mono" style="left:380.29999999999995px;top:392.00px;font-size:17.3px;line-height:28px;height:28px;color:#343741">metrics</div>
<div class="t mono" style="left:699.0999999999999px;top:392.00px;font-size:17.3px;line-height:28px;color:#000"><span style="background:#ffff00;padding:4px 0 0">my-otel-demo-frontend-</span><br><span style="background:#ffff00;padding:4px 0 0">5d9467bb4-zb6gg</span></div>
<div class="t mono" style="left:1349.5px;top:392.00px;font-size:17.3px;line-height:28px;height:28px;color:#343741">-</div>
<div class="t mono" style="left:1020px;top:392.00px;font-size:17.3px;line-height:28px;color:#343741"> -</div>
<div class="a" style="left:0;top:478px;width:1560px;height:94px;background:#f1f4fa;border-bottom:2px solid #d8dee8"></div>
<div class="a" style="left:6.199999999999989px;top:484.4px;width:22.8px;height:22.8px;border:2px solid #a7acb4;border-radius:6px;background:#fff"></div>
<svg class="a" style="left:43.5px;top:489px" width="18" height="18" viewBox="0 0 18 18"><path d="M3 15L14.6 3.4M10.3 2.2H15.8V7.6M2.2 10.4V15.8H7.6" fill="none" stroke="#5d6370" stroke-width="1.4" stroke-linecap="round" stroke-linejoin="round"/></svg>
<div class="t mono" style="left:76px;top:486.00px;font-size:17.3px;line-height:28px;height:28px;color:#343741">Feb 3, 2025 @ 13:03:34.440</div>
<div class="t mono" style="left:380.29999999999995px;top:486.00px;font-size:17.3px;line-height:28px;height:28px;color:#343741">metrics</div>
<div class="t mono" style="left:699.0999999999999px;top:486.00px;font-size:17.3px;line-height:28px;color:#000"><span style="background:#ffff00;padding:4px 0 0">my-otel-demo-frontend-</span><br><span style="background:#ffff00;padding:4px 0 0">5d9467bb4-zb6gg</span></div>
<div class="t mono" style="left:1349.5px;top:486.00px;font-size:17.3px;line-height:28px;height:28px;color:#343741">-</div>
<div class="t mono" style="left:1020px;top:486.00px;font-size:17.3px;line-height:28px;color:#343741"> -</div>
<div class="a" style="left:0;top:572px;width:1560px;height:93px;background:#ffffff;border-bottom:2px solid #d8dee8"></div>
<div class="a" style="left:6.199999999999989px;top:578.4px;width:22.8px;height:22.8px;border:2px solid #a7acb4;border-radius:6px;background:#fff"></div>
<svg class="a" style="left:43.5px;top:583px" width="18" height="18" viewBox="0 0 18 18"><path d="M3 15L14.6 3.4M10.3 2.2H15.8V7.6M2.2 10.4V15.8H7.6" fill="none" stroke="#5d6370" stroke-width="1.4" stroke-linecap="round" stroke-linejoin="round"/></svg>
<div class="t mono" style="left:76px;top:580.00px;font-size:17.3px;line-height:28px;height:28px;color:#343741">Feb 3, 2025 @ 13:03:34.440</div>
<div class="t mono" style="left:380.29999999999995px;top:580.00px;font-size:17.3px;line-height:28px;height:28px;color:#343741">metrics</div>
<div class="t mono" style="left:699.0999999999999px;top:580.00px;font-size:17.3px;line-height:28px;color:#000"><span style="background:#ffff00;padding:4px 0 0">my-otel-demo-frontend-</span><br><span style="background:#ffff00;padding:4px 0 0">5d9467bb4-zb6gg</span></div>
<div class="t mono" style="left:1349.5px;top:580.00px;font-size:17.3px;line-height:28px;height:28px;color:#343741">-</div>
<div class="t mono" style="left:1020px;top:580.00px;font-size:17.3px;line-height:28px;color:#343741"> -</div>
</div></div></body></html>
